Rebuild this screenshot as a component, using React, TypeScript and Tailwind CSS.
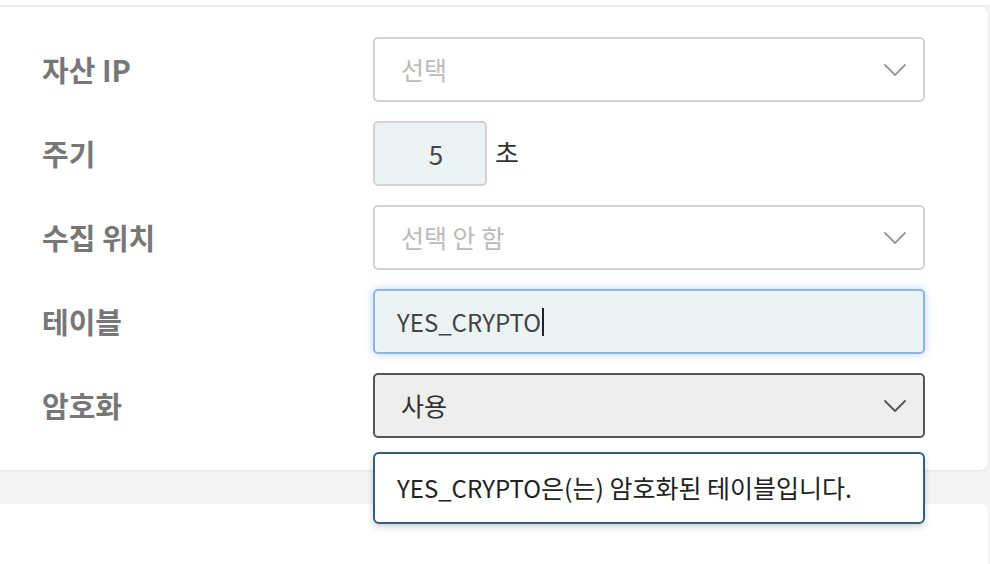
import React from 'react'

const font = { fontFamily: '"Noto Sans CJK KR", "Noto Sans", sans-serif' }

const Chevron = ({ color }: { color: string }) => (
  <svg width="24" height="14" viewBox="0 0 24 14" fill="none">
    <polyline points="2,2 12,12 22,2" stroke={color} strokeWidth="1.8" strokeLinecap="round" strokeLinejoin="round" />
  </svg>
)

const Row = ({ label, children }: { label: string; children: React.ReactNode }) => (
  <div className="flex items-center h-[65px]">
    <div className="w-[373px] shrink-0 pl-[42px] text-[29px] font-bold text-[#777777] leading-none">{label}</div>
    {children}
  </div>
)

export default function App() {
  return (
    <div className="min-h-screen bg-[#f4f4f4] overflow-hidden" style={font}>
      <div className="h-[5px] bg-white" />
      <div className="h-[2px] bg-[#eeeeee]" />

      {/* Form card */}
      <div className="relative w-[988px] bg-white rounded-r-lg shadow-[0_1px_3px_rgba(0,0,0,0.08)] pt-[30px] pb-[32px] flex flex-col gap-[19px]">
        <Row label="자산 IP">
          <div className="w-[552px] h-[65px] border-2 border-[#d2d2d2] rounded-[5px] bg-white flex items-center justify-between pl-[26px] pr-[16px]">
            <span className="text-[25px] text-[#bbbbbb]">선택</span>
            <Chevron color="#999999" />
          </div>
        </Row>

        <Row label="주기">
          <div className="flex items-center gap-[8px]">
            <div className="w-[114px] h-[65px] border-2 border-[#d2d2d2] rounded-[5px] bg-[#ebf3f5] flex items-center justify-center pl-[12px]">
              <span className="text-[26px] text-[#444444]">5</span>
            </div>
            <span className="text-[26px] text-[#333333] -mt-[4px]">초</span>
          </div>
        </Row>

        <Row label="수집 위치">
          <div className="w-[552px] h-[65px] border-2 border-[#d2d2d2] rounded-[5px] bg-white flex items-center justify-between pl-[26px] pr-[16px]">
            <span className="text-[25px] text-[#bbbbbb]">선택 안 함</span>
            <Chevron color="#999999" />
          </div>
        </Row>

        <Row label="테이블">
          <div className="w-[552px] h-[65px] border-2 border-[#8ab6ec] rounded-[5px] bg-[#ebf3f5] shadow-[0_0_8px_rgba(110,165,235,0.45)] flex items-center pl-[22px]">
            <span className="text-[24px] text-[#444444]">YES_CRYPTO</span>
            <span className="w-[2px] h-[28px] bg-[#222222] ml-[1px]" />
          </div>
        </Row>

        <Row label="암호화">
          <div className="relative w-[552px] h-[65px] border-2 border-[#555555] rounded-[5px] bg-[#eeeeee] flex items-center justify-between pl-[26px] pr-[16px]">
            <span className="text-[25px] text-[#333333]">사용</span>
            <Chevron color="#555555" />

            {/* Tooltip */}
            <div className="absolute left-[-2px] top-[77px] w-[552px] h-[72px] border-2 border-[#2f5f84] rounded-[6px] bg-white shadow-[0_3px_6px_rgba(0,0,0,0.18)] flex items-center pl-[22px] z-10">
              <span className="text-[24px] text-[#222222]">
                YES_CRYPTO<span className="text-[25px]">은(는) 암호화된 테이블입니다.</span>
              </span>
            </div>
          </div>
        </Row>
      </div>

      <div className="h-[34px]" />
      <div className="w-[988px] h-[80px] bg-white rounded-tr-lg" />
    </div>
  )
}
